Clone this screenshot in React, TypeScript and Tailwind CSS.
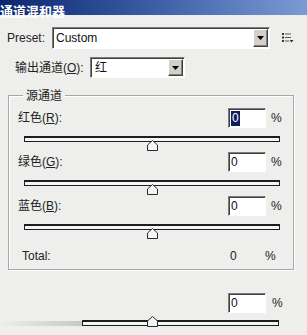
import type { ReactNode } from 'react';

function Sunken({ className, children }: { className: string; children?: ReactNode }) {
  return (
    <div
      className={`flex items-center bg-white border border-t-[#7c7c7c] border-l-[#7c7c7c] border-b-white border-r-white shadow-[inset_1px_1px_0_#404040] ${className}`}
    >
      {children}
    </div>
  );
}

function ArrowButton() {
  return (
    <div className="ml-auto mr-[1px] flex h-[calc(100%-2px)] w-[15px] items-center justify-center border border-t-white border-l-white border-b-[#404040] border-r-[#404040] bg-[#d4d0c8] shadow-[inset_-1px_-1px_0_#808080]">
      <svg width="7" height="4" viewBox="0 0 7 4">
        <polygon points="0,0 7,0 3.5,4" fill="#000" />
      </svg>
    </div>
  );
}

function MenuIcon() {
  return (
    <svg width="12" height="10" viewBox="0 0 12 10" className="ml-[12px]">
      <rect x="0" y="0" width="2" height="2" fill="#333" />
      <rect x="3" y="0.5" width="6" height="1" fill="#555" />
      <rect x="0" y="3.5" width="2" height="2" fill="#333" />
      <rect x="3" y="4" width="6" height="1" fill="#555" />
      <rect x="0" y="7" width="2" height="2" fill="#333" />
      <rect x="3" y="7.5" width="4" height="1" fill="#555" />
      <polygon points="7.5,7 11.5,7 9.5,9.5" fill="#333" />
    </svg>
  );
}

function Thumb({ left }: { left: string }) {
  return (
    <svg width="11" height="11" viewBox="0 0 11 11" className={`absolute top-[4px] ${left}`}>
      <polygon points="0.5,10.5 0.5,5 5.5,0.5 10.5,5 10.5,10.5" fill="#f4f4f4" stroke="#2a2a2a" />
    </svg>
  );
}

function Slider() {
  return (
    <div className="relative h-[24px] pl-[15px] pr-[13px]">
      <div className="mt-[8px] h-[6px] border border-t-[2px] border-[#1e1e1e] bg-[#f6f6f6]" />
      <Thumb left="left-[138px]" />
    </div>
  );
}

function ValueBox({ selected }: { selected?: boolean }) {
  return (
    <Sunken className="h-[20px] w-[38px] pl-[2px] text-[12px] text-[#111]">
      {selected ? <span className="bg-[#0a1f5c] px-[1px] leading-[15px] text-white">0</span> : <span>0</span>}
    </Sunken>
  );
}

function Channel({ name, keyChar, selected }: { name: string; keyChar: string; selected?: boolean }) {
  return (
    <div className="h-[44px]">
      <div className="flex h-[20px] items-center pl-[9px] pr-[10px]">
        <span className="flex-1 text-[12px] text-[#222]">
          {name}(<u>{keyChar}</u>):
        </span>
        <ValueBox selected={selected} />
        <span className="ml-[5px] w-[12px] text-[12px] text-[#222]">%</span>
      </div>
      <Slider />
    </div>
  );
}

export default function App() {
  return (
    <div className="h-[335px] w-[307px] overflow-hidden bg-[#eeeeec] font-['Liberation_Sans','Noto_Sans_CJK_SC',sans-serif]">
      {/* Title bar */}
      <div className="h-[15px] bg-gradient-to-r from-[#0b2670] via-[#3c5ea6] to-[#7d9bd3]">
        <span className="relative -top-[1px] text-[13px] font-bold leading-[16px] text-white">通道混和器</span>
      </div>

      {/* Preset */}
      <div className="mt-[12px] flex items-center pl-[7px]">
        <span className="w-[45px] text-[12px] text-[#222]">Preset:</span>
        <Sunken className="h-[22px] w-[218px] pl-[3px] text-[12px] text-[#111]">
          <span>Custom</span>
          <ArrowButton />
        </Sunken>
        <MenuIcon />
      </div>

      {/* Output channel */}
      <div className="mt-[8px] flex items-center pl-[15px]">
        <span className="w-[75px] text-[12px] text-[#222]">
          输出通道(<u>O</u>):
        </span>
        <Sunken className="h-[21px] w-[95px] pl-[4px] text-[12px] text-[#111]">
          <span>红</span>
          <ArrowButton />
        </Sunken>
      </div>

      {/* Source channels */}
      <div className="relative ml-[8px] mt-[17px] h-[175px] w-[286px] border border-[#a7a7a7] pt-[12px] shadow-[inset_1px_1px_0_#fff,1px_1px_0_#fff]">
        <span className="absolute -top-[9px] left-[14px] bg-[#eeeeec] px-[3px] text-[12px] text-[#222]">源通道</span>
        <Channel name="红色" keyChar="R" selected />
        <Channel name="绿色" keyChar="G" />
        <Channel name="蓝色" keyChar="B" />
        <div className="mt-[6px] flex h-[20px] items-center pl-[13px] text-[12px] text-[#222]">
          <span className="w-[208px]">Total:</span>
          <span className="w-[35px]">0</span>
          <span>%</span>
        </div>
      </div>

      {/* Constant */}
      <div className="mt-[23px] flex h-[20px] items-center pl-[228px]">
        <ValueBox />
        <span className="ml-[6px] text-[12px] text-[#222]">%</span>
      </div>
      <div className="relative mt-[-1px] flex h-[24px] items-start pr-[28px]">
        <div className="mt-[9px] h-[5px] w-[82px] bg-gradient-to-r from-[#eeeeec] to-[#c8c8c8]" />
        <div className="mt-[8px] h-[6px] flex-1 border border-t-[2px] border-[#1e1e1e] bg-[#f6f6f6]" />
        <Thumb left="left-[147px]" />
      </div>
    </div>
  );
}
